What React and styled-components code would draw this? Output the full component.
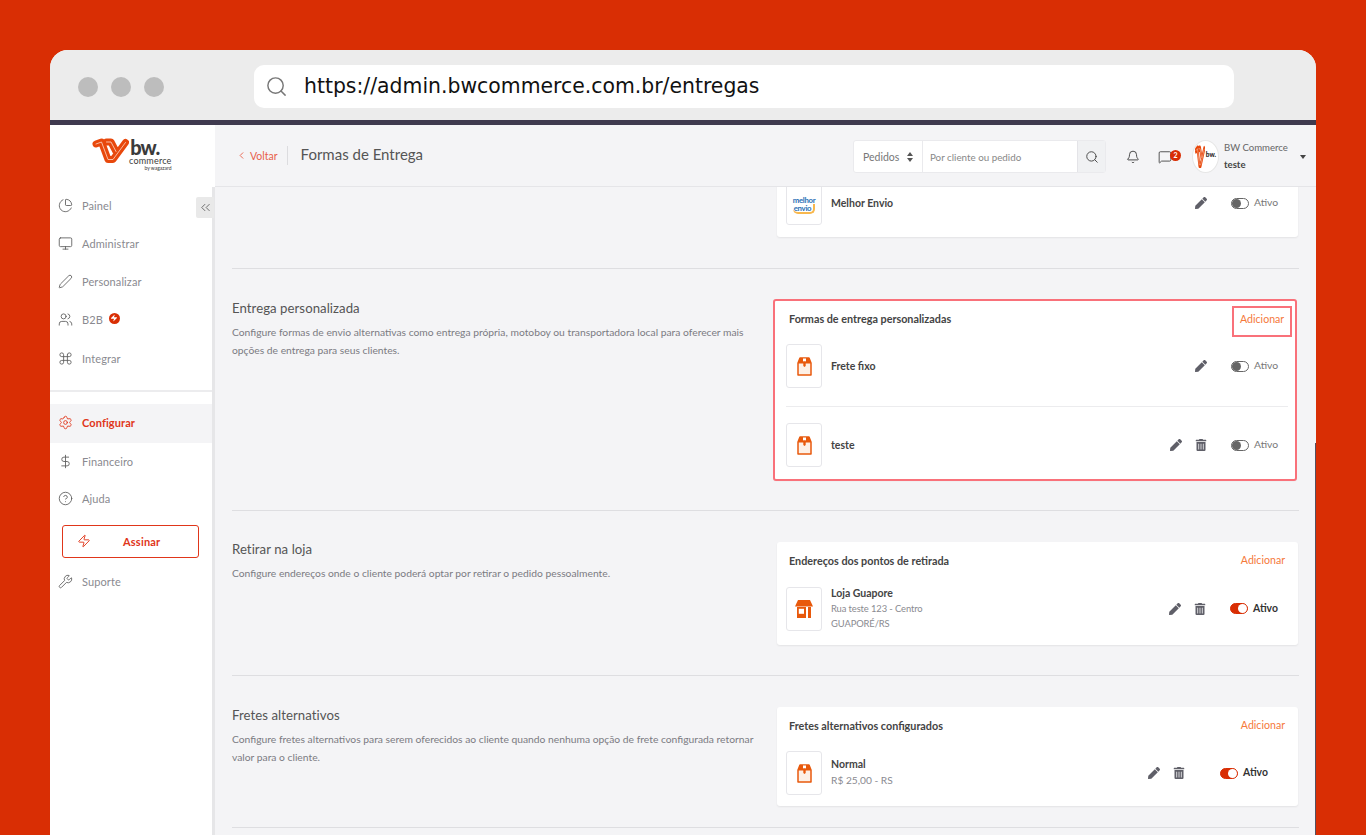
import React from "react";
import styled, { createGlobalStyle } from "styled-components";
import { ChartPie, Monitor, Pen, Users, Command, Settings, DollarSign, CircleHelp, Zap, Wrench, Bell, MessageSquare, Search, ChevronLeft, ChevronsLeft } from "lucide-react";
import { FaPen, FaTrashAlt } from "react-icons/fa";

const Global = createGlobalStyle`
  html, body { margin: 0; padding: 0; height: 835px; overflow: hidden; background: #d92e04; }
  * { box-sizing: border-box; }
  body { font-family: Lato, "Noto Sans", sans-serif; }
`;
const Stage = styled.div`
  height: 835px; padding: 50px 50px 0; background: #d92e04;
`;
const Frame = styled.div`
  position: relative; width: 1266px; height: 785px; border-radius: 18px 18px 0 0; overflow: hidden;
  background: #f4f4f6; display: flex; flex-direction: column;
  &::after { content: ""; position: absolute; right: 0; top: 393px; bottom: 0; width: 1px; background: #55505f; }
`;
const BrowserBar = styled.div`
  flex: none; height: 75px; padding: 15px 0 0 28px; background: #ececec; border-bottom: 5px solid #3f3a4f;
  display: flex; align-items: flex-start;
`;
const Dots = styled.div`display: flex; gap: 13px; margin-top: 12px; width: 176px;`;
const Dot = styled.span`width: 20px; height: 20px; border-radius: 50%; background: #bdbdbd;`;
const UrlBar = styled.div`
  width: 980px; height: 43px; background: #fff; border-radius: 10px; display: flex; align-items: center; padding: 0 0 0 11px;
`;
const UrlText = styled.span`
  font-family: "DejaVu Sans", sans-serif; font-size: 20.4px; color: #111; margin-left: 16px; white-space: nowrap; position: relative; top: -1px;
`;
const AppBody = styled.div`flex: 1; display: flex; min-height: 0;`;
const Sidebar = styled.aside`
  position: relative; flex: none; width: 165px; background: #fff; display: flex; flex-direction: column;
`;
const LogoArea = styled.div`
  flex: none; height: 62px; padding: 13px 0 0 42px; display: flex; align-items: flex-start;
`;
const LogoText = styled.div`
  margin-left: 0; color: #3b3b3b; display: flex; flex-direction: column; align-items: flex-end; line-height: 1;
`;
const LogoBw = styled.b`font-size: 20px; font-weight: 900; letter-spacing: -0.8px; margin-right: 12px; height: 18px; line-height: 18px;`;
const LogoCommerce = styled.span`font-size: 9px; letter-spacing: 0.2px; line-height: 9px;`;
const LogoBy = styled.span`font-size: 5px; line-height: 6px;`;
const Nav = styled.nav`
  flex: 1; border-right: 3px solid #e6e6e8; display: flex; flex-direction: column;
`;
const CollapseBtn = styled.div`
  position: absolute; left: 146px; top: 72px; width: 18px; height: 21px; background: #e9e9e9; border-radius: 2px 0 0 2px;
  color: #666; display: flex; align-items: center; justify-content: center;
`;
const NavItem = styled.div`
  flex: none; height: ${(p) => p.$h || 38.25}px; padding: 0 0 2px 8px; display: flex; align-items: center; gap: 9px;
  font-size: 11px; letter-spacing: 0.1px; white-space: nowrap;
  color: ${(p) => (p.$active ? "#e0361a" : "#8a8a90")};
  font-weight: ${(p) => (p.$active ? 700 : 400)};
  background: ${(p) => (p.$active ? "#f4f4f6" : "transparent")};
  svg.ico { color: ${(p) => (p.$active ? "#e0361a" : "#5f5f5f")}; flex: none; }
`;
const NavDivider = styled.div`height: 2px; background: #ececee; margin: 12px 0 12px;`;
const NavBadge = styled.span`
  width: 11px; height: 11px; border-radius: 50%; background: #d92e04; color: #fff; margin-left: -3px; margin-top: -3px;
  display: flex; align-items: center; justify-content: center;
`;
const SubscribeBtn = styled.div`
  flex: none; width: 137px; height: 33px; margin: 7px 0 7px 12px; border: 1px solid #e0361a; border-radius: 3px; padding-bottom: 1px;
  display: flex; align-items: center; padding-left: 14px; color: #e0361a; font-size: 11px; font-weight: 700;
`;
const SubscribeLabel = styled.span`margin-left: 32px; letter-spacing: 0.2px;`;
const Page = styled.div`flex: 1; min-width: 0; display: flex; flex-direction: column;`;
const Header = styled.header`
  flex: none; height: 62px; border-bottom: 1px solid #e5e5e8; background: #f4f4f6; display: flex; align-items: center; padding: 0 10px 0 21px; position: relative; z-index: 1;
`;
const Back = styled.div`
  display: flex; align-items: center; gap: 3px; color: #e8604a; font-size: 10.5px; padding-right: 9px; border-right: 1px solid #dcdcdf; height: 19px;
`;
const PageTitle = styled.h1`
  margin: -4px 0 0 13px; font-size: 15px; font-weight: 400; color: #555; letter-spacing: 0; white-space: nowrap;
`;
const SearchGroup = styled.div`
  margin-left: auto; width: 253px; height: 33px; display: flex; background: #fff; border: 1px solid #eaeaed; border-radius: 3px; margin-top: 2px; font-size: 9.8px; color: #888;
`;
const SearchSelect = styled.div`
  width: 69px; padding-left: 9px; border-right: 1px solid #eaeaed; display: flex; align-items: center; gap: 8px; color: #777; font-size: 10.5px;
`;
const SearchInput = styled.div`flex: 1; padding-left: 7px; display: flex; align-items: center;`;
const SearchBtn = styled.div`
  width: 28px; background: #f0f1f3; border-left: 1px solid #e4e4e8; display: flex; align-items: center; justify-content: center; color: #444;
`;
const HeaderIcon = styled.div`
  position: relative; color: #333; margin-left: ${(p) => p.$ml}px; display: flex; margin-top: 2px;
`;
const CountBadge = styled.span`
  position: absolute; left: 12px; top: 0; width: 11px; height: 11px; border-radius: 50%; background: #d92e04; color: #fff;
  font-size: 7px; font-weight: 700; display: flex; align-items: center; justify-content: center;
`;
const Avatar = styled.div`
  margin-left: 20px; width: 27px; height: 33px; border-radius: 50%; background: #fff; border: 1px solid #e6e6e6; overflow: hidden; flex: none; display: flex; align-items: center; justify-content: center; margin-top: 2px; gap: 1px;
`;
const AvatarInfo = styled.span`
  font-size: 6.5px; font-weight: 900; color: #222; line-height: 7px; display: flex; flex-direction: column; align-items: center; margin-top: -5px;
`;
const UserInfo = styled.div`
  margin-left: 5px; font-size: 9.6px; color: #666; line-height: 17px; margin-top: 1px; white-space: nowrap; width: 76px;
`;
const UserSub = styled.div`color: #444; font-weight: 700;`;
const Caret = styled.span`
  width: 0; height: 0; border-left: 3px solid transparent; border-right: 3px solid transparent; border-top: 4px solid #444; margin-top: 2px;
`;
const Scroll = styled.main`flex: 1; min-height: 0; overflow: hidden; padding: 0 17px;`;
const Section = styled.section`
  display: grid; grid-template-columns: 545px 521px; align-items: start; padding: ${(p) => p.$pt ?? 31}px 0 ${(p) => p.$pb ?? 30}px;
  margin-top: ${(p) => p.$mt || 0}px; border-bottom: 1px solid #dedee1;
`;
const Intro = styled.div`margin-top: ${(p) => p.$mt ?? -1}px;`;
const IntroTitle = styled.h2`margin: 0 0 6px; font-size: 13.2px; line-height: 18px; font-weight: 400; color: #555; letter-spacing: 0.05px;`;
const IntroText = styled.p`margin: 0; font-size: 10.3px; line-height: 18px; color: #7b7b82; width: 525px;`;
const Card = styled.div`
  position: relative; background: #fff; border-radius: 3px; padding: ${(p) => p.$pt ?? 7}px 10px ${(p) => p.$pb ?? 14}px 9px; box-shadow: 0 1px 2px rgba(0,0,0,0.07);
  ${(p) => p.$flag && `outline: 2px solid #f9717a; outline-offset: -1px; border-radius: 2px; margin: 0 2px 0 -3px; padding-left: 12px; padding-right: 8px;`}
`;
const CardHead = styled.div`
  height: 22px; display: flex; align-items: center; justify-content: space-between; margin-bottom: 15px; padding: 0 3px;
  font-size: 10.8px; font-weight: 700; color: #444;
`;
const AddLink = styled.span`
  color: #f5793b; font-weight: 400; font-size: 10.6px;
  ${(p) => p.$flag && `outline: 2px solid #f9717a; outline-offset: -1px; box-sizing: border-box; padding: 6px 0 11px 7px; width: 58px; margin: 7px -6px 0 0; white-space: nowrap;`}
`;
const Row = styled.div`
  display: flex; align-items: center; padding-right: ${(p) => p.$pr ?? 11}px;
`;
const RowRule = styled.div`height: 1px; background: #ececee; margin: 18px 0 16px;`;
const IconBox = styled.div`
  flex: none; width: 36px; height: 44px; background: #fff; border: 1px solid #e6e6ea; border-radius: 3px; display: flex; align-items: center; justify-content: center; overflow: hidden;
`;
const RowText = styled.div`margin-left: 9px; display: flex; flex-direction: column;`;
const RowName = styled.div`font-size: 10.5px; font-weight: 700; color: #444; line-height: 15px;`;
const RowDetail = styled.div`
  color: #8a8a90;
  font-size: ${(p) => (p.$small ? 9.4 : 10.2)}px;
  line-height: ${(p) => (p.$small ? 15 : 17)}px;
  letter-spacing: ${(p) => (p.$small ? -0.1 : 0)}px;
`;
const Actions = styled.div`margin-left: auto; display: flex; align-items: center; color: #5f5f68;`;
const TrashWrap = styled.span`display: flex; margin-left: 13px;`;
const Toggle = styled.span`
  position: relative; width: 18px; height: 11px; border-radius: 6px; margin-left: ${(p) => p.$ml ?? 24}px;
  border: 1px solid ${(p) => (p.$on ? "#d92e04" : "#666")}; background: ${(p) => (p.$on ? "#d92e04" : "#fff")};
  &::after {
    content: ""; position: absolute; top: 0; bottom: 0; width: 9px; border-radius: 50%;
    ${(p) => (p.$on ? "right: 0; background: #fff;" : "left: 0; background: #666;")}
  }
`;
const ToggleLabel = styled.span`
  margin-left: 5px; font-size: 10.4px; width: 23px; margin-top: -2px;
  color: ${(p) => (p.$on ? "#333" : "#777")}; font-weight: ${(p) => (p.$on ? 700 : 400)};
`;
const EnvioLogo = styled.div`
  margin-top: 4px; font-size: 7.8px; line-height: 8px; font-weight: 700; color: #2a6fb5; text-align: center; letter-spacing: -0.3px;
`;
const EnvioSub = styled.div`
  text-align: right; padding-right: 2px; border: 1px solid #f8b84e; border-width: 0 2px 2px 0; border-radius: 0 0 5px 5px;
`;

const BoxIcon = () => (
  <svg width="15" height="19" viewBox="0 0 15 19" fill="none">
    <path d="M1 6 3 1h9l2 5v12H1Z" fill="#fdf0e6" stroke="#e8590c" strokeWidth="1.5" strokeLinejoin="round" />
    <path d="M1 6.5 3 1h9l2 5.5Z" fill="#e8590c" />
    <path d="M6 1.5h3V4.5H6Z" fill="#fff" />
    <path d="M6.3 4.5h2.4V9L7.5 10 6.3 9Z" fill="#e8590c" />
  </svg>
);
const StoreIcon = () => (
  <svg width="18" height="18" viewBox="0 0 18 18">
    <path d="M3 0h12l3 6.5H0Z" fill="#e8590c" />
    <path d="M2 7h9v11H2Z" fill="#e8590c" />
    <rect x="3.8" y="8.8" width="5.2" height="5" fill="#fff" />
    <rect x="13" y="7" width="3" height="11" fill="#e8590c" />
  </svg>
);
const LogoMark = ({ w = 37, h = 26, ratio }) => (
  <svg width={w} height={h} viewBox="0 0 36 26" fill="none" preserveAspectRatio={ratio || "xMidYMid meet"}>
    <g strokeLinejoin="round" strokeLinecap="round">
      <path d="M3.5 6 9 4 15.5 21.5H20.5L33 4.5M14 4H18.5L23.5 13.5" stroke="#e8480c" strokeWidth="7" />
      <path d="M3.5 6 9 4 15.5 21.5H20.5L33 4.5M14 4H18.5L23.5 13.5" stroke="#fbd9c8" strokeWidth="0.8" />
    </g>
  </svg>
);
const Melhor = () => (
  <EnvioLogo>
    melhor
    <EnvioSub>envio</EnvioSub>
  </EnvioLogo>
);
const Controls = ({ trash, on, gap }) => (
  <Actions>
    <FaPen size={12} />
    {trash && <TrashWrap><FaTrashAlt size={12} /></TrashWrap>}
    <Toggle $on={on} $ml={gap} />
    <ToggleLabel $on={on}>Ativo</ToggleLabel>
  </Actions>
);

export default function App() {
  const ico = { className: "ico", size: 15, strokeWidth: 1.4 };
  return (
    <Stage>
      <Global />
      <Frame>
        <BrowserBar>
          <Dots><Dot /><Dot /><Dot /></Dots>
          <UrlBar>
            <Search size={23} color="#777" strokeWidth={1.5} />
            <UrlText>https://admin.bwcommerce.com.br/entregas</UrlText>
          </UrlBar>
        </BrowserBar>
        <AppBody>
          <Sidebar>
            <LogoArea>
              <LogoMark />
              <LogoText>
                <LogoBw>bw.</LogoBw>
                <LogoCommerce>commerce</LogoCommerce>
                <LogoBy>by wagazard</LogoBy>
              </LogoText>
            </LogoArea>
            <CollapseBtn><ChevronsLeft size={15} strokeWidth={1.5} /></CollapseBtn>
            <Nav>
              <NavItem><ChartPie {...ico} />Painel</NavItem>
              <NavItem><Monitor {...ico} />Administrar</NavItem>
              <NavItem><Pen {...ico} />Personalizar</NavItem>
              <NavItem>
                <Users {...ico} />B2B
                <NavBadge><Zap size={8} fill="#fff" strokeWidth={0} /></NavBadge>
              </NavItem>
              <NavItem><Command {...ico} />Integrar</NavItem>
              <NavDivider />
              <NavItem $active $h={39}><Settings {...ico} />Configurar</NavItem>
              <NavItem $h={38}><DollarSign {...ico} />Financeiro</NavItem>
              <NavItem $h={37}><CircleHelp {...ico} />Ajuda</NavItem>
              <SubscribeBtn>
                <Zap size={14} strokeWidth={1.6} />
                <SubscribeLabel>Assinar</SubscribeLabel>
              </SubscribeBtn>
              <NavItem $h={34}><Wrench {...ico} />Suporte</NavItem>
            </Nav>
          </Sidebar>
          <Page>
            <Header>
              <Back><ChevronLeft size={11} strokeWidth={2} />Voltar</Back>
              <PageTitle>Formas de Entrega</PageTitle>
              <SearchGroup>
                <SearchSelect>
                  Pedidos
                  <svg width="6" height="10" viewBox="0 0 6 10" fill="#555"><path d="M3 0 6 4H0ZM3 10 0 6h6Z" /></svg>
                </SearchSelect>
                <SearchInput>Por cliente ou pedido</SearchInput>
                <SearchBtn><Search size={14} strokeWidth={1.6} /></SearchBtn>
              </SearchGroup>
              <HeaderIcon $ml={20}><Bell size={14} strokeWidth={1.5} /></HeaderIcon>
              <HeaderIcon $ml={18}>
                <MessageSquare size={14} strokeWidth={1.4} />
                <CountBadge>2</CountBadge>
              </HeaderIcon>
              <Avatar>
                <LogoMark w={10} h={24} ratio="none" />
                <AvatarInfo>bw.</AvatarInfo>
              </Avatar>
              <UserInfo>
                BW Commerce
                <UserSub>teste</UserSub>
              </UserInfo>
              <Caret />
            </Header>
            <Scroll>
              <Section $pt={0} $mt={-18} $pb={31}>
                <div />
                <Card $pt={12} $pb={12}>
                  <Row>
                    <IconBox><Melhor /></IconBox>
                    <RowText><RowName>Melhor Envio</RowName></RowText>
                    <Controls />
                  </Row>
                </Card>
              </Section>
              <Section>
                <Intro>
                  <IntroTitle>Entrega personalizada</IntroTitle>
                  <IntroText>Configure formas de envio alternativas como entrega própria, motoboy ou transportadora local para oferecer mais opções de entrega para seus clientes.</IntroText>
                </Intro>
                <Card $flag $pb={13}>
                  <CardHead>Formas de entrega personalizadas<AddLink $flag>Adicionar</AddLink></CardHead>
                  <Row>
                    <IconBox><BoxIcon /></IconBox>
                    <RowText><RowName>Frete fixo</RowName></RowText>
                    <Controls />
                  </Row>
                  <RowRule />
                  <Row>
                    <IconBox><BoxIcon /></IconBox>
                    <RowText><RowName>teste</RowName></RowText>
                    <Controls trash />
                  </Row>
                </Card>
              </Section>
              <Section>
                <Intro $mt={-2}>
                  <IntroTitle>Retirar na loja</IntroTitle>
                  <IntroText>Configure endereços onde o cliente poderá optar por retirar o pedido pessoalmente.</IntroText>
                </Intro>
                <Card $pb={14}>
                  <CardHead>Endereços dos pontos de retirada<AddLink>Adicionar</AddLink></CardHead>
                  <Row $pr={12}>
                    <IconBox><StoreIcon /></IconBox>
                    <RowText>
                      <RowName>Loja Guapore</RowName>
                      <RowDetail $small>Rua teste 123 - Centro</RowDetail>
                      <RowDetail $small>GUAPORÉ/RS</RowDetail>
                    </RowText>
                    <Controls trash on />
                  </Row>
                </Card>
              </Section>
              <Section $pb={21}>
                <Intro>
                  <IntroTitle>Fretes alternativos</IntroTitle>
                  <IntroText>Configure fretes alternativos para serem oferecidos ao cliente quando nenhuma opção de frete configurada retornar valor para o cliente.</IntroText>
                </Intro>
                <Card $pb={11}>
                  <CardHead>Fretes alternativos configurados<AddLink>Adicionar</AddLink></CardHead>
                  <Row $pr={22}>
                    <IconBox><BoxIcon /></IconBox>
                    <RowText>
                      <RowName>Normal</RowName>
                      <RowDetail>R$ 25,00 - RS</RowDetail>
                    </RowText>
                    <Controls trash on gap={35} />
                  </Row>
                </Card>
              </Section>
            </Scroll>
          </Page>
        </AppBody>
      </Frame>
    </Stage>
  );
}
